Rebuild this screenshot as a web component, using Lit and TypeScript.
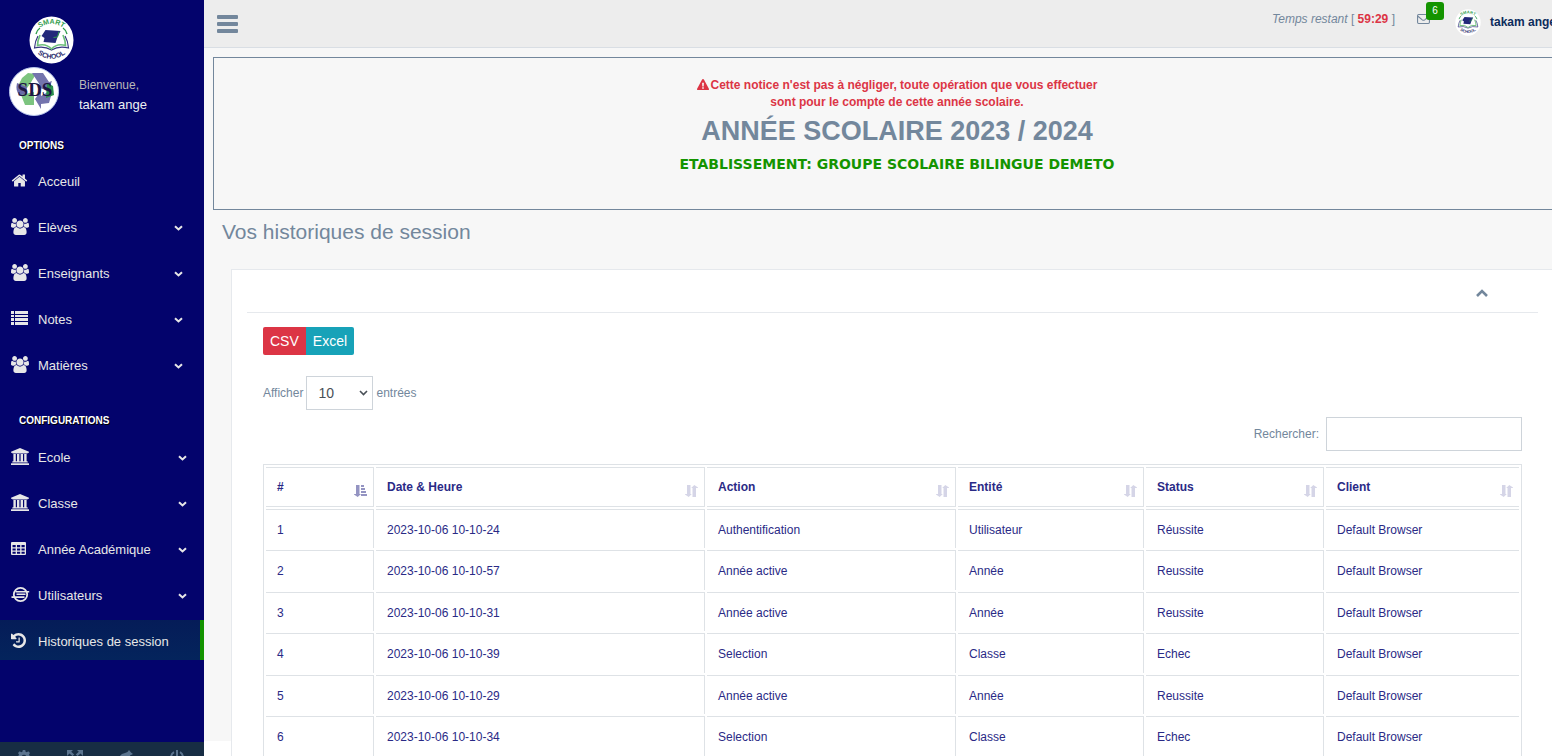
import { LitElement, html, svg, css, type SVGTemplateResult } from "lit";
import { customElement, property, state } from "lit/decorators.js";

type Glyph = { box: string; width: number; height: number; art: SVGTemplateResult };

const GLYPHS: Record<string, Glyph> = {
  home: {
    box: "0 0 1792 1792", width: 17, height: 17,
    art: svg`<path d="M1472 992v480q0 26-19 45t-45 19h-384v-384h-256v384h-384q-26 0-45-19t-19-45v-480q0-1 .5-3t.5-3l575-474 575 474q1 2 1 6zm223-69l-62 74q-8 9-21 11h-3q-13 0-21-7l-692-577-692 577q-12 8-24 7-13-2-21-11l-62-74q-8-10-7-23.500t11-21.500l719-599q32-26 76-26t76 26l244 204v-195q0-14 9-23t23-9h192q14 0 23 9t9 23v408l219 182q10 8 11 21.500t-7 23.500z"/>`,
  },
  users: {
    box: "64 0 1920 1792", width: 18, height: 17,
    art: svg`<path d="M657 896q-162 5-265 128h-134q-82 0-138-40.500t-56-118.500q0-353 124-353 6 0 43.500 21t97.500 42.500 119 21.500q67 0 133-23-5 37-5 66 0 139 81 256zm1071 637q0 120-73 189.500t-194 69.500h-874q-121 0-194-69.500t-73-189.500q0-53 3.500-103.500t14-109 26.500-108.500 43-97.500 62-81 85.500-53.500 111.500-20q10 0 43 21.500t73 48 107 48 135 21.500 135-21.500 107-48 73-48 43-21.500q61 0 111.500 20t85.500 53.500 62 81 43 97.500 26.500 108.500 14 109 3.500 103.500zm-1024-1277q0 106-75 181t-181 75-181-75-75-181 75-181 181-75 181 75 75 181zm704 384q0 159-112.500 271.500t-271.500 112.500-271.500-112.500-112.500-271.500 112.500-271.500 271.500-112.500 271.500 112.500 112.500 271.500zm576 225q0 78-56 118.500t-138 40.500h-134q-103-123-265-128 81-117 81-256 0-29-5-66 66 23 133 23 59 0 119-21.500t97.500-42.500 43.500-21q124 0 124 353zm-128-609q0 106-75 181t-181 75-181-75-75-181 75-181 181-75 181 75 75 181z"/>`,
  },
  list: {
    box: "0 0 17 14", width: 17, height: 14,
    art: svg`<path d="M0 0h3v3H0zM4 0h13v3H4zM0 4h3v2H0zM4 4h13v2H4zM0 7h3v3H0zM4 7h13v3H4zM0 11h3v3H0zM4 11h13v3H4z"/>`,
  },
  bank: {
    box: "0 0 1920 1792", width: 18, height: 17,
    art: svg`<path d="M960 0l960 384v128h-128q0 26-20.500 45t-48.500 19h-1526q-28 0-48.500-19t-20.500-45h-128v-128zm-704 640h256v768h128v-768h256v768h128v-768h256v768h128v-768h256v768h59q28 0 48.500 19t20.500 45v64h-1664v-64q0-26 20.500-45t48.500-19h59v-768zm1595 960q28 0 48.500 19t20.500 45v128h-1920v-128q0-26 20.500-45t48.500-19h1782z"/>`,
  },
  table: {
    box: "0 0 15 13", width: 15, height: 13,
    art: svg`<path fill-rule="evenodd" d="M1 0h13q1 0 1 1v11q0 1-1 1H1q-1 0-1-1V1q0-1 1-1zM1.500 3v2.300h3.200V3zM6 3v2.300h3.200V3zM10.500 3v2.300h3.200V3zM1.500 6.400v2.200h3.200V6.400zM6 6.400v2.200h3.200V6.400zM10.500 6.400v2.200h3.200V6.400zM1.500 9.700v2.100h3.200V9.700zM6 9.700v2.100h3.200V9.700zM10.500 9.700v2.100h3.200V9.700z"/>`,
  },
  ring: {
    box: "0 0 19 17", width: 19, height: 17,
    art: svg`<circle cx="9.500" cy="8.500" r="6.700" fill="none" stroke="currentColor" stroke-width="1.800"/><path d="M4.500 5h13.700v1.500H4.500zM5.500 7.500h9V9h-9zM.5 10.200h13V12H.5z"/>`,
  },
  history: {
    box: "128 128 1536 1536", width: 15, height: 15,
    art: svg`<path d="M1664 896q0 156-61 298t-164 245-245 164-298 61q-172 0-327-72.500t-264-204.500q-7-10-6.500-22.500t8.500-20.500l137-138q10-9 25-9 16 2 23 12 73 95 179 147t225 52q104 0 198.500-40.500t163.500-109.500 109.500-163.500 40.500-198.500-40.500-198.500-109.500-163.500-163.500-109.500-198.500-40.500q-98 0-188 35.500t-160 101.500l137 138q31 30 14 69-17 40-59 40h-448q-26 0-45-19t-19-45v-448q0-42 40-59 39-17 69 14l130 129q107-101 244.500-156.500t284.500-55.500q156 0 298 61t245 164 164 245 61 298zm-640-288v448q0 14-9 23t-23 9h-320q-14 0-23-9t-9-23v-64q0-14 9-23t23-9h224v-352q0-14 9-23t23-9h64q14 0 23 9t9 23z"/>`,
  },
  down: {
    box: "0 0 9 6", width: 9, height: 6,
    art: svg`<path d="M1 1.200l3.500 3.300L8 1.200" fill="none" stroke="currentColor" stroke-width="2"/>`,
  },
  caret: {
    box: "0 0 9 6", width: 9, height: 6,
    art: svg`<path d="M1 1l3.500 3.500L8 1" fill="none" stroke="currentColor" stroke-width="1.600"/>`,
  },
  up: {
    box: "0 0 12 8", width: 12, height: 8,
    art: svg`<path d="M1 7l5-5 5 5" fill="none" stroke="currentColor" stroke-width="2.600"/>`,
  },
  bars: {
    box: "0 0 21 18", width: 21, height: 18,
    art: svg`<rect width="21" height="4" rx="1"/><rect y="7" width="21" height="4" rx="1"/><rect y="14" width="21" height="4" rx="1"/>`,
  },
  warning: {
    box: "0 0 12 11", width: 12, height: 11,
    art: svg`<path fill-rule="evenodd" d="M6 0q.6 0 .9.500l5 9.300q.3.600-.1.900-.2.300-.7.300H.9q-.5 0-.7-.3-.4-.4-.1-.9l5-9.300Q5.400 0 6 0zM5.100 3.800l.2 3.600h1.400l.2-3.600zM5.200 8.200v1.500h1.600V8.200z"/>`,
  },
  mail: {
    box: "0 0 14 11", width: 13, height: 10,
    art: svg`<rect x=".6" y=".6" width="12.800" height="9.800" rx="1.200" fill="none" stroke="currentColor" stroke-width="1.200"/><path d="M1 2.500l4.700 3.900q1.300 1 2.600 0L13 2.500" fill="none" stroke="currentColor" stroke-width="1.200"/>`,
  },
  sort: {
    box: "0 0 13 12", width: 13, height: 12,
    art: svg`<path d="M2 0h3.500v9h1.300L3.700 12 0 9.500V9h2zM7.500 12H11V3h2v-.5L9.300 0 6.200 3h1.300z"/>`,
  },
  sorted: {
    box: "0 0 13 12", width: 13, height: 12,
    art: svg`<path d="M2 0h3.500v9H7l-3.300 3L0 9.500V9h2zM7 0h3v2H7zM7 3h4v2H7zM7 6h5v2H7zM7 9h6v2H7z"/>`,
  },
  gear: {
    box: "0 0 14 14", width: 14, height: 14,
    art: svg`<path fill-rule="evenodd" d="M5.800 0h2.400l.4 1.800 1.200.5 1.500-1 1.700 1.700-1 1.500.5 1.200 1.500.4v2.300l-1.500.4-.5 1.200 1 1.500-1.700 1.700-1.500-1-1.200.5-.4 1.300H5.800l-.4-1.300-1.200-.5-1.500 1L1 11.500 2 10l-.5-1.200L0 8.400V6.100l1.500-.4L2 4.500 1 3l1.700-1.700 1.500 1 1.200-.5zM7 4.800a2.300 2.300 0 100 4.600 2.300 2.300 0 000-4.600z"/>`,
  },
  expand: {
    box: "0 0 16 14", width: 16, height: 14,
    art: svg`<path d="M0 0h6L4.200 1.800l3 2.700-1.700 1.600-3-2.700L0 6zM16 0h-6l1.800 1.800-3 2.700 1.700 1.600 3-2.700L16 6zM0 14h6l-1.800-1.800 3-2.700-1.700-1.600-3 2.700L0 8zM16 14h-6l1.800-1.800-3-2.700 1.700-1.600 3 2.700L16 8z"/>`,
  },
  leaf: {
    box: "0 0 14 14", width: 14, height: 14,
    art: svg`<path d="M10 0l2 2.500L14 4l-3 1.500Q12 13 6 13 0 13 0 8q1-4 6-5 3-.5 4-3z"/>`,
  },
  power: {
    box: "0 0 14 14", width: 14, height: 14,
    art: svg`<path d="M4 2.200a6 6 0 106 0M7 0v7" fill="none" stroke="currentColor" stroke-width="2"/>`,
  },
};

const icon = (name: string) => {
  const g = GLYPHS[name];
  return html`<svg class="icon" viewBox=${g.box} width=${g.width} height=${g.height} preserveAspectRatio="none" aria-hidden="true">${g.art}</svg>`;
};

const schoolLogo = (width: number, height: number, id: string) => html`
  <svg class="icon" viewBox="0 0 45 48" width=${width} height=${height} preserveAspectRatio="none" role="img" aria-label="Smart School">
    <defs>
      <path id="${id}-top" d="M6 18A18.500 18.500 0 0 1 39 18" />
      <path id="${id}-bottom" d="M5 33A19 16 0 0 0 40 33" />
    </defs>
    <ellipse cx="22.500" cy="24" rx="22" ry="23.500" fill="#fff" />
    <text font-family="Liberation Sans, Arial, sans-serif" font-size="7" font-weight="700" fill="#2f9d4c" text-anchor="middle"><textPath href="#${id}-top" startOffset="50%">SMART</textPath></text>
    <text font-family="Liberation Sans, Arial, sans-serif" font-size="7" font-weight="700" fill="#2d2e6e" text-anchor="middle"><textPath href="#${id}-bottom" startOffset="50%">SCHOOL</textPath></text>
    <path d="M7 18Q8.500 13.500 11 12M38 18Q36.500 13.500 34 12" fill="none" stroke="#2f9d4c" stroke-width="1.400" />
    <path d="M9 20Q6 25 5.500 32Q15 29.500 22.500 34Q30 29.500 39.500 32Q39 25 36 20" fill="none" stroke="#35357f" stroke-width="1.200" />
    <path d="M11 19Q8.500 25 8.500 29.500Q17 27 22.500 33Q28 27 36.500 29.500Q36.500 25 34 19" fill="none" stroke="#6fc07c" stroke-width="1.700" />
    <path d="M16.500 14l15 1-3 6-2 6-12-1 1-4-3-2z" fill="#23297a" />
    <path d="M30 15.500l-1.500 5.500-4 .5" fill="none" stroke="#2f9d4c" stroke-width="1" />
  </svg>
`;

const groupLogo = html`
  <svg class="icon" viewBox="0 0 50 49" width="50" height="49" role="img" aria-label="SDS">
    <ellipse cx="25" cy="24.500" rx="24.500" ry="24" fill="#fff" stroke="#b9c7ec" />
    <path d="M19 6l8 1-6 10-3 4-8-4 3-6z" fill="#7cc47f" />
    <path d="M23 6h11l6 9 3-1-4 10-11-4 3-2z" fill="#7474ad" />
    <path d="M8 16l10 4-1 9h-6Q6 24 8 16z" fill="#6a6aa8" />
    <path d="M12 28l13-3v13h-9z" fill="#7cc47f" />
    <path d="M44 22l-4 14-8 1v5l-6-10 6-8v5z" fill="#7474ad" />
    <path d="M38 16l6 3 1 9-8 3z" fill="#2b8f4d" />
    <text x="26" y="29" text-anchor="middle" font-family="Liberation Serif, Times New Roman, serif" font-size="19" font-weight="700" fill="#1c1644">SDS</text>
  </svg>
`;

type Entry = { icon: string; label: string; folds?: boolean; active?: boolean };

const SECTIONS: { title: string; entries: Entry[] }[] = [
  {
    title: "OPTIONS",
    entries: [
      { icon: "home", label: "Acceuil" },
      { icon: "users", label: "Elèves", folds: true },
      { icon: "users", label: "Enseignants", folds: true },
      { icon: "list", label: "Notes", folds: true },
      { icon: "users", label: "Matières", folds: true },
    ],
  },
  {
    title: "CONFIGURATIONS",
    entries: [
      { icon: "bank", label: "Ecole", folds: true },
      { icon: "bank", label: "Classe", folds: true },
      { icon: "table", label: "Année Académique", folds: true },
      { icon: "ring", label: "Utilisateurs", folds: true },
      { icon: "history", label: "Historiques de session", active: true },
    ],
  },
];

const base = css`
  * { box-sizing: border-box; }
  .icon { display: block; flex: none; fill: currentColor; }
  a { color: inherit; text-decoration: none; }
  button { font: inherit; color: inherit; border: 0; background: none; padding: 0; cursor: pointer; }
`;

@customElement("side-menu")
export class SideMenu extends LitElement {
  static styles = [
    base,
    css`
      :host { display: flex; flex-direction: column; height: 100vh; background: #03036c; color: #e7e7e7; font-size: 13px; line-height: 20px; }
      .brand { padding: 16px 0 0 29px; }
      .profile { display: flex; gap: 20px; padding: 3px 0 0 9px; }
      .welcome { padding-top: 8px; font-size: 12px; color: #bab8b8; }
      .user { font-size: 13px; color: #ecf0f1; }
      .menu { flex: 1; min-height: 0; overflow: hidden; padding-top: 20px; }
      .title { margin: 0 0 5px; padding-left: 19px; font-size: 10px; line-height: 20px; font-weight: 700; color: #fff; text-shadow: 1px 1px #000; }
      .list { list-style: none; display: grid; gap: 6px; margin: 0 0 26px; padding: 0; }
      .link { display: flex; align-items: center; height: 40px; padding: 11px 21px 9px 11px; }
      .section:last-child .link { padding: 12px 17px 8px 11px; }
      .section .link.active { border-right: 4px solid #149400; background: linear-gradient(#051c58, #04245c); }
      .mark { width: 27px; margin-bottom: 4px; flex: none; }
      .label { flex: 1; }
      .tools { display: grid; grid-template-columns: repeat(4, 1fr); height: 14px; overflow: hidden; background: #172d44; color: #5a738e; }
      .tool { display: flex; justify-content: center; padding: 8px 3px 0 0; }
    `,
  ];

  render() {
    return html`
      <div class="brand"><a href="#">${schoolLogo(45, 48, "brand")}</a></div>
      <div class="profile">
        ${groupLogo}
        <div class="welcome">Bienvenue,<div class="user">takam ange</div></div>
      </div>
      <nav class="menu">
        ${SECTIONS.map(
          (s) => html`
            <div class="section">
              <h3 class="title">${s.title}</h3>
              <ul class="list">
                ${s.entries.map(
                  (e) => html`<li>
                    <a class="link ${e.active ? "active" : ""}" href="#">
                      <span class="mark">${icon(e.icon)}</span>
                      <span class="label">${e.label}</span>
                      ${e.folds ? icon("down") : ""}
                    </a>
                  </li>`
                )}
              </ul>
            </div>
          `
        )}
      </nav>
      <div class="tools">
        <a class="tool" href="#" aria-label="Paramètres">${icon("gear")}</a>
        <a class="tool" href="#" aria-label="Plein écran">${icon("expand")}</a>
        <a class="tool" href="#" aria-label="Verrouiller">${icon("leaf")}</a>
        <a class="tool" href="#" aria-label="Déconnexion">${icon("power")}</a>
      </div>
    `;
  }
}

@customElement("top-bar")
export class TopBar extends LitElement {
  static styles = [
    base,
    css`
      :host { display: flex; align-items: flex-start; height: 48px; padding-left: 13px; background: #ededed; border-bottom: 1px solid #d9dee4; color: #73879c; font-size: 12px; line-height: 18px; }
      .toggle { padding-top: 15px; color: #73879c; }
      .right { display: flex; align-items: flex-start; margin: 0 -4px 0 auto; white-space: nowrap; }
      .timer { padding-top: 10px; margin-right: 22px; }
      .time { color: #dc3545; }
      .inbox { position: relative; padding-top: 14px; margin-right: 25px; }
      .badge { position: absolute; top: 2px; left: 9px; width: 18px; height: 18px; border-radius: 3px; background: #149400; color: #fff; font-size: 10px; text-align: center; }
      .account { display: flex; gap: 9px; padding-top: 9px; color: #0c2c5c; font-weight: 700; }
      .name { padding-top: 4px; }
    `,
  ];

  render() {
    return html`
      <button class="toggle" aria-label="Menu">${icon("bars")}</button>
      <div class="right">
        <div class="timer"><em>Temps restant</em> [ <b class="time">59:29</b> ]</div>
        <a class="inbox" href="#" aria-label="Messages">${icon("mail")}<span class="badge">6</span></a>
        <a class="account" href="#">${schoolLogo(26, 27, "account")}<span class="name">takam ange</span></a>
      </div>
    `;
  }
}

type Column = { label: string; width: number };

const COLUMNS: Column[] = [
  { label: "#", width: 108 },
  { label: "Date & Heure", width: 329 },
  { label: "Action", width: 249 },
  { label: "Entité", width: 186 },
  { label: "Status", width: 178 },
  { label: "Client", width: 193 },
];

const ROWS: string[][] = [
  ["1", "2023-10-06 10-10-24", "Authentification", "Utilisateur", "Réussite", "Default Browser"],
  ["2", "2023-10-06 10-10-57", "Année active", "Année", "Reussite", "Default Browser"],
  ["3", "2023-10-06 10-10-31", "Année active", "Année", "Reussite", "Default Browser"],
  ["4", "2023-10-06 10-10-39", "Selection", "Classe", "Echec", "Default Browser"],
  ["5", "2023-10-06 10-10-29", "Année active", "Année", "Reussite", "Default Browser"],
  ["6", "2023-10-06 10-10-34", "Selection", "Classe", "Echec", "Default Browser"],
];

@customElement("session-table")
export class SessionTable extends LitElement {
  @property({ attribute: false }) rows: string[][] = [];
  @state() private sorted = 0;

  static styles = [
    base,
    css`
      :host { display: block; }
      .grid { width: 100%; table-layout: fixed; border: 1px solid #dee2e6; border-collapse: separate; border-spacing: 2px; color: #2a2a86; font-size: 12px; line-height: 18px; }
      .head { padding: 10px 6px 9px 11px; border: solid #dee2e6; border-width: 1px 1px 1px 0; text-align: left; }
      .cell { padding: 11px 11px 9px; border: solid #dee2e6; border-width: 1px 1px 0 0; }
      .row:nth-child(even) .cell { padding-bottom: 10px; }
      .head:last-child, .cell:last-child { border-right: 0; }
      .sort { display: flex; justify-content: space-between; width: 100%; height: 19px; line-height: 18px; font-weight: 700; }
      .sort .icon { align-self: flex-end; color: #d5d5e7; }
      .sort.on .icon { color: #9494c2; }
    `,
  ];

  render() {
    return html`
      <table class="grid">
        <colgroup>${COLUMNS.map((c) => html`<col style="width:${c.width}px" />`)}</colgroup>
        <thead>
          <tr>
            ${COLUMNS.map(
              (c, i) => html`<th class="head" scope="col">
                <button class="sort ${i === this.sorted ? "on" : ""}" @click=${() => (this.sorted = i)}>
                  <span>${c.label}</span>${icon(i === this.sorted ? "sorted" : "sort")}
                </button>
              </th>`
            )}
          </tr>
        </thead>
        <tbody>
          ${this.rows.map((r) => html`<tr class="row">${r.map((v) => html`<td class="cell">${v}</td>`)}</tr>`)}
        </tbody>
      </table>
    `;
  }
}

@customElement("app-root")
export class AppRoot extends LitElement {
  static styles = [
    base,
    css`
      :host { display: grid; grid-template-columns: 204px minmax(0, 1fr); height: 100vh; overflow: hidden; background: #fff; color: #73879c; font: 12px/18px "Liberation Sans", Arial, sans-serif; }
      .page { height: calc(100vh - 15px); background: #f7f7f7; }
      .notice { margin: 9px -29px 0 9px; padding: 19px 10px 35px; border: 1px solid #73879c; text-align: center; }
      .alert { max-width: 410px; margin: 0 auto; color: #dc3545; font-weight: 700; line-height: 17px; }
      .alert .icon { display: inline-block; vertical-align: -1px; margin-right: 2px; }
      .year { margin: 2px 0 5px; font-size: 27px; line-height: 36px; font-weight: 700; }
      .school { margin: 0; color: #149400; font-family: "DejaVu Sans", Verdana, sans-serif; font-size: 14px; line-height: 20px; font-weight: 700; }
      .heading { margin: 0; padding: 8px 0 23px 18px; font-size: 21px; line-height: 28px; font-weight: 400; }
      .card { margin: 0 -2px 0 27px; padding: 0 15px 30px; background: #fff; border: 1px solid #e6e9ed; }
      .bar { display: flex; justify-content: flex-end; padding: 19px 50px 15px 0; border-bottom: 1px solid #e6e9ed; }
      .body { padding: 14px 16px 0; }
      .exports { display: flex; font-size: 14px; color: #fff; }
      .export { height: 28px; padding: 0 7px 1px; background: #dc3545; border-radius: 2px 0 0 2px; }
      .export.excel { background: #17a2b8; border-radius: 0 2px 2px 0; }
      .length { display: flex; align-items: center; gap: 3px; margin-top: 21px; }
      .pick { display: grid; align-items: center; }
      .pick > * { grid-area: 1 / 1; }
      .pick .icon { justify-self: end; margin-right: 5px; color: #495057; pointer-events: none; }
      .count, .query { height: 34px; border: 1px solid #ced4da; border-radius: 0; background: #fff; color: #495057; font: 14px "Liberation Sans", Arial, sans-serif; }
      .count { width: 67px; padding: 0 11px; appearance: none; }
      .search { display: flex; justify-content: flex-end; align-items: center; gap: 7px; margin: 7px 0 13px; }
      .query { width: 196px; padding: 0 12px; }
    `,
  ];

  render() {
    return html`
      <side-menu></side-menu>
      <div class="page">
        <top-bar></top-bar>
        <main>
          <section class="notice">
            <p class="alert">${icon("warning")}Cette notice n'est pas à négliger, toute opération que vous effectuer sont pour le compte de cette année scolaire.</p>
            <h1 class="year">ANNÉE SCOLAIRE 2023 / 2024</h1>
            <p class="school">ETABLISSEMENT: GROUPE SCOLAIRE BILINGUE DEMETO</p>
          </section>
          <h2 class="heading">Vos historiques de session</h2>
          <section class="card">
            <div class="bar"><button aria-label="Réduire">${icon("up")}</button></div>
            <div class="body">
              <div class="exports">
                <button class="export">CSV</button><button class="export excel">Excel</button>
              </div>
              <div class="length">
                <label for="count">Afficher</label>
                <span class="pick">
                  <select class="count" id="count"><option>10</option><option>25</option><option>50</option><option>100</option></select>
                  ${icon("caret")}
                </span>
                <label for="count">entrées</label>
              </div>
              <div class="search">
                <label for="query">Rechercher:</label>
                <input class="query" id="query" type="search" />
              </div>
              <session-table .rows=${ROWS}></session-table>
            </div>
          </section>
        </main>
      </div>
    `;
  }
}
